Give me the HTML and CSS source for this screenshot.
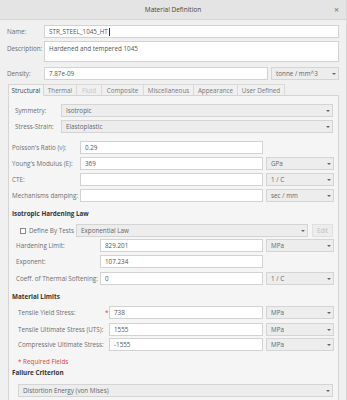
FILE: index.html
```html
<!DOCTYPE html>
<html>
<head>
<meta charset="utf-8">
<link rel="stylesheet" href="styles.css">
</head>
<body>
<div class="titlebar"><span class="title">Material Definition</span><span class="close">✕</span></div>
<div class="content">
  <div class="row">
    <span class="lbl top-lbl">Name:</span>
    <div class="field grow">STR_STEEL_1045_HT<span class="caret"></span></div>
  </div>
  <div class="row desc-row">
    <span class="lbl top-lbl">Description:</span>
    <div class="field grow desc">Hardened and tempered 1045</div>
  </div>
  <div class="row density-row">
    <span class="lbl top-lbl">Density:</span>
    <div class="field grow">7.87e-09</div>
    <div class="select unit-top">tonne / mm^3<span class="arrow"></span></div>
  </div>
  <div class="tabs">
    <span class="tab active t1">Structural</span>
    <span class="tab t2">Thermal</span>
    <span class="tab disabled t3">Fluid</span>
    <span class="tab t4">Composite</span>
    <span class="tab t5">Miscellaneous</span>
    <span class="tab t6">Appearance</span>
    <span class="tab t7">User Defined</span>
  </div>
  <div class="panel">
    <div class="row first">
      <span class="lbl sel-lbl">Symmetry:</span>
      <div class="select grow">Isotropic<span class="arrow"></span></div>
    </div>
    <div class="row gap3">
      <span class="lbl sel-lbl">Stress-Strain:</span>
      <div class="select grow">Elastoplastic<span class="arrow"></span></div>
    </div>
    <div class="row gap8">
      <span class="lbl prop-lbl">Poisson's Ratio (ν):</span>
      <div class="field w-val">0.29</div>
    </div>
    <div class="row gap3">
      <span class="lbl prop-lbl">Young's Modulus (E):</span>
      <div class="field w-val">369</div>
      <div class="select unit">GPa<span class="arrow"></span></div>
    </div>
    <div class="row gap3">
      <span class="lbl prop-lbl">CTE:</span>
      <div class="field w-val"></div>
      <div class="select unit">1 / C<span class="arrow"></span></div>
    </div>
    <div class="row gap3">
      <span class="lbl prop-lbl">Mechanisms damping:</span>
      <div class="field w-val"></div>
      <div class="select unit">sec / mm<span class="arrow"></span></div>
    </div>

    <div class="heading h-iso">Isotropic Hardening Law</div>
    <div class="row define-row">
      <span class="check"></span>
      <span class="lbl check-lbl">Define By Tests</span>
      <div class="select grow">Exponential Law<span class="arrow"></span></div>
      <span class="btn">Edit</span>
    </div>
    <div class="row gap2">
      <span class="lbl hard-lbl">Hardening Limit:</span>
      <div class="field w-hard">829.201</div>
      <div class="select unit">MPa<span class="arrow"></span></div>
    </div>
    <div class="row gap3">
      <span class="lbl hard-lbl">Exponent:</span>
      <div class="field w-hard">107.234</div>
    </div>
    <div class="row gap4">
      <span class="lbl hard-lbl">Coeff. of Thermal Softening:</span>
      <div class="field w-hard">0</div>
      <div class="select unit">1 / C<span class="arrow"></span></div>
    </div>

    <div class="heading h-lim">Material Limits</div>
    <div class="row gap5">
      <span class="lbl lim-lbl">Tensile Yield Stress:</span>
      <span class="req">*</span>
      <div class="field w-lim">738</div>
      <div class="select unit">MPa<span class="arrow"></span></div>
    </div>
    <div class="row gap4">
      <span class="lbl lim-lbl">Tensile Ultimate Stress (UTS):</span>
      <span class="req"></span>
      <div class="field w-lim">1555</div>
      <div class="select unit">MPa<span class="arrow"></span></div>
    </div>
    <div class="row gap2">
      <span class="lbl lim-lbl">Compressive Ultimate Stress:</span>
      <span class="req"></span>
      <div class="field w-lim">-1555</div>
      <div class="select unit">MPa<span class="arrow"></span></div>
    </div>
    <div class="required">* Required Fields</div>
    <div class="heading h-fail">Failure Criterion</div>
    <div class="row fail-row">
      <div class="select grow">Distortion Energy (von Mises)<span class="arrow"></span></div>
    </div>
  </div>
</div>
</body>
</html>
```

FILE: styles.css
```css
html, body {
  margin: 0;
  padding: 0;
}
body {
  width: 347px;
  height: 400px;
  overflow: hidden;
  background: #f0f0f0;
  font-family: "Open Sans", "Noto Sans", sans-serif;
  font-size: 6.3px;
  color: #666;
  border-right: 1px solid #d8d8d8;
  box-sizing: border-box;
}
.titlebar {
  height: 20px;
  background: #e4e4e4;
  border-bottom: 1px solid #d6d6d6;
  box-sizing: border-box;
  display: flex;
  align-items: center;
  justify-content: center;
  position: relative;
}
.title {
  color: #444;
  font-size: 6.5px;
}
.close {
  position: absolute;
  right: 7px;
  top: 6px;
  font-size: 6px;
  color: #888;
  font-weight: bold;
}
.content {
  padding: 5px 7px 0 7px;
}
.row {
  display: flex;
  align-items: center;
  height: 13px;
}
.grow {
  flex: 1;
  min-width: 0;
}
.lbl {
  white-space: nowrap;
  color: #6e6e6e;
  box-sizing: border-box;
  flex: none;
}
.top-lbl {
  width: 37px;
}
.desc-row {
  margin-top: 3px;
  height: 21px;
  align-items: flex-start;
}
.desc-row .top-lbl {
  margin-top: 3px;
}
.field {
  height: 13px;
  box-sizing: border-box;
  border: 1px solid #d2d2d2;
  background: #fff;
  padding: 0 4px;
  display: flex;
  align-items: center;
  color: #555;
  white-space: nowrap;
}
.field.desc {
  height: 21px;
  align-items: flex-start;
  padding-top: 2px;
}
.caret {
  display: inline-block;
  width: 1px;
  height: 8px;
  background: #333;
  margin-left: 1px;
}
.density-row {
  margin-top: 5px;
}
.select {
  height: 13px;
  box-sizing: border-box;
  border: 1px solid #d4d4d4;
  background: #ededed;
  padding: 0 12px 0 4px;
  display: flex;
  align-items: center;
  color: #666;
  position: relative;
  white-space: nowrap;
}
.arrow {
  position: absolute;
  right: 0;
  top: 0;
  bottom: 0;
  width: 8px;
}
.arrow::after {
  content: "";
  position: absolute;
  left: 2px;
  top: 5px;
  border-left: 2px solid transparent;
  border-right: 2px solid transparent;
  border-top: 2px solid #666;
}
.unit-top {
  width: 68px;
  margin-left: 3px;
  flex: none;
}
.tabs {
  margin-top: 4px;
  margin-left: 1px;
  height: 12px;
  display: flex;
}
.tab {
  height: 12px;
  box-sizing: border-box;
  border: 1px solid #dadada;
  border-left: none;
  border-bottom: 1px solid #d4d4d4;
  display: flex;
  align-items: center;
  justify-content: center;
  color: #7a7a7a;
  background: #f0f0f0;
  white-space: nowrap;
}
.tab.active {
  border-left: 1px solid #d4d4d4;
  border-color: #d4d4d4;
  border-bottom-color: #f5f5f5;
  background: #f5f5f5;
  color: #444;
}
.tab.disabled {
  color: #c4c4c4;
}
.t1 { width: 36px; }
.t2 { width: 33px; }
.t3 { width: 25px; }
.t4 { width: 42px; }
.t5 { width: 50px; }
.t6 { width: 44px; }
.t7 { width: 47px; }
.panel {
  margin-left: 1px;
  margin-top: -1px;
  border: 1px solid #d4d4d4;
  border-bottom: none;
  background: #f5f5f5;
  padding: 8px 5px 20px 3px;
}
.sel-lbl {
  width: 49px;
  padding-left: 3px;
}
.gap2 { margin-top: 2px; }
.gap3 { margin-top: 3px; }
.gap4 { margin-top: 4px; }
.gap5 { margin-top: 5px; }
.gap8 { margin-top: 8px; }
.prop-lbl {
  width: 68px;
}
.w-val {
  width: 183px;
  flex: none;
}
.w-hard {
  width: 163px;
  flex: none;
}
.w-lim {
  width: 154px;
  flex: none;
}
.unit {
  width: 68px;
  flex: none;
  margin-left: 3px;
}
.heading {
  font-weight: bold;
  color: #333;
  height: 8px;
  line-height: 8px;
  white-space: nowrap;
}
.h-iso { margin-top: 8px; }
.h-lim { margin-top: 8px; }
.h-fail { margin-top: 3px; }
.define-row {
  margin-top: 6px;
}
.check {
  width: 6px;
  height: 6px;
  box-sizing: border-box;
  border: 1px solid #888;
  background: #fff;
  margin-left: 8px;
  flex: none;
}
.check-lbl {
  width: 50px;
  padding-left: 3px;
}
.btn {
  width: 21px;
  height: 13px;
  margin-left: 4px;
  box-sizing: border-box;
  border: 1px solid #e0e0e0;
  background: #ededed;
  color: #bdbdbd;
  display: flex;
  align-items: center;
  justify-content: center;
  flex: none;
}
.hard-lbl {
  width: 88px;
  padding-left: 4px;
}
.lim-lbl {
  width: 93px;
  padding-left: 6px;
}
.req {
  width: 4px;
  flex: none;
  color: #e04040;
}
.required {
  margin-top: 7px;
  height: 8px;
  line-height: 8px;
  padding-left: 6px;
  color: #e03c3c;
}
.fail-row {
  margin-top: 7px;
  padding-left: 6px;
}
```
